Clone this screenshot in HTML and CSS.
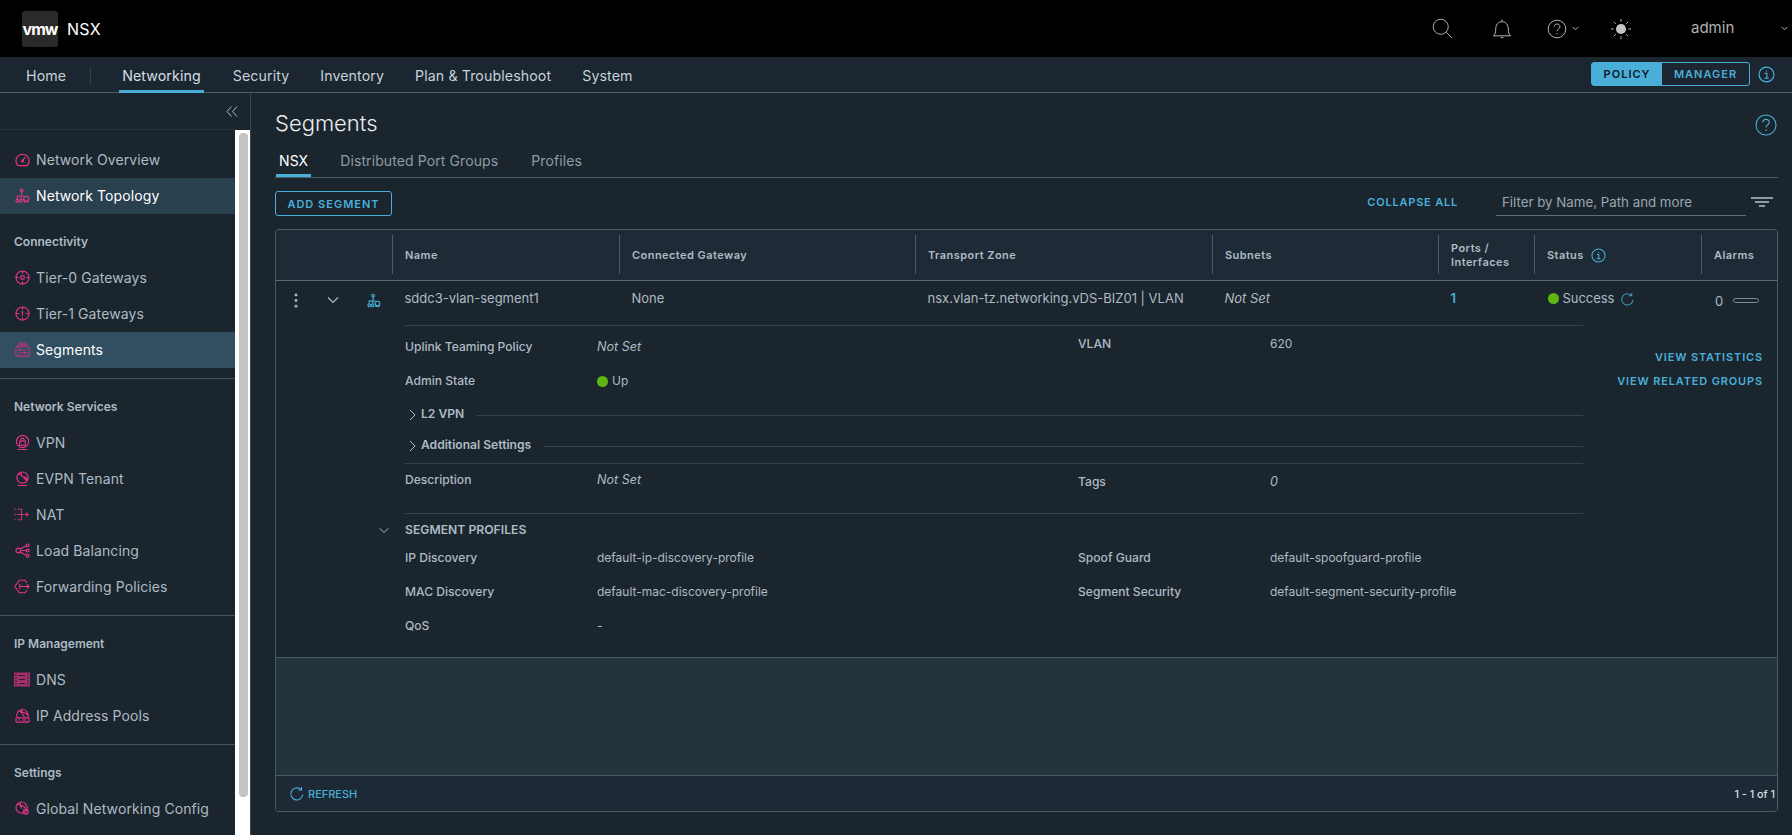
FILE: index.html
```html
<!DOCTYPE html>
<html lang="en">
<head>
<meta charset="utf-8">
<title>NSX Segments</title>
<link rel="stylesheet" href="styles.css">
</head>
<body>
<header class="topbar">
  <div class="logo">vmw</div>
  <div class="product">NSX</div>
  <div class="top-actions">
    <svg class="t-search" viewBox="0 0 24 24"><circle cx="10" cy="10" r="8.6"/><path d="M16.4 16.4 23 23"/></svg>
    <svg class="t-bell" viewBox="0 0 22 24"><path d="M1.5 19.5c2-2 2.6-3.6 2.6-7.5 0-4.6 2.6-8 6.9-8s6.9 3.4 6.9 8c0 3.900.6 5.500 2.600 7.500z"/><path d="M11 4V1.500M9.500 21.500h3"/></svg>
    <svg class="t-help" viewBox="0 0 22 22"><circle cx="11" cy="11" r="9.700"/><path d="M7.800 8.500c0-4 6.400-4 6.400 0 0 2.500-3.200 2.500-3.200 5M11 15.700v1.300"/></svg>
    <svg class="t-caret" viewBox="0 0 8 5"><path d="M.7.700 4 4 7.300.700"/></svg>
    <svg class="t-sun" viewBox="0 0 24 24"><circle class="fill" cx="12" cy="12" r="5.500"/><path d="M12 1v3M12 20v3M1 12h3M20 12h3M4.200 4.200l2.200 2.200M17.600 17.600l2.200 2.200M4.200 19.800l2.200-2.200M17.600 6.400l2.200-2.200"/></svg>
    <span class="user">admin</span>
    <svg class="t-caret t-caret-user" viewBox="0 0 8 5"><path d="M.7.700 4 4 7.300.700"/></svg>
  </div>
</header>

<nav class="navbar">
  <a class="nav-home">Home</a>
  <span class="nav-sep"></span>
  <a class="nav-link active">Networking</a>
  <a class="nav-link">Security</a>
  <a class="nav-link">Inventory</a>
  <a class="nav-link">Plan &amp; Troubleshoot</a>
  <a class="nav-link">System</a>
  <div class="mode">
    <div class="toggle"><span class="tog on">POLICY</span><span class="tog">MANAGER</span></div>
    <svg class="info info-lg" viewBox="0 0 16 16"><circle cx="8" cy="8" r="7"/><path d="M6.300 7h2v4.500M6 11.500h4.200M8 4.200v1"/></svg>
  </div>
</nav>

<div class="shell">
  <aside class="sidebar">
    <div class="panel">
      <div class="collapse-row">
        <svg class="collapse" viewBox="0 0 12 12"><path d="M5.500 1 1 6l4.500 5M11 1 6.500 6l4.500 5"/></svg>
      </div>
      <div class="menu">
        <a class="item"><svg class="ic" viewBox="0 0 16 16"><path d="M3.200 14.500a7 7 0 1 1 9.600 0zM8 9l3-3.500"/><circle cx="8" cy="9.500" r="1"/></svg>Network Overview</a>
        <a class="item hover"><svg class="ic" viewBox="0 0 16 16"><circle cx="7" cy="2.500" r="1.500"/><path d="M7 4v3M2.500 12V8.500h7M6.500 8.500V12"/><circle cx="2.500" cy="13.500" r="1.500"/><circle cx="6.500" cy="13.500" r="1.500"/><circle cx="12" cy="11.500" r="2.700"/><path d="M9.500 14.800h5"/></svg>Network Topology</a>
        <div class="group">Connectivity</div>
        <a class="item"><svg class="ic" viewBox="0 0 16 16"><circle cx="8" cy="8" r="7"/><circle cx="8" cy="8" r="2"/><path d="M8 1v3M8 12v3M1 8h3M12 8h3"/></svg>Tier-0 Gateways</a>
        <a class="item"><svg class="ic" viewBox="0 0 16 16"><circle cx="8" cy="8" r="7"/><path d="M7 6.500 8 6v4.500M8 1v3M8 12v3M1 8h3.500M11.500 8H15"/></svg>Tier-1 Gateways</a>
        <a class="item current"><svg class="ic dim" viewBox="0 0 16 16"><path d="M3.500 1h9M2.500 3h11"/><rect x="1" y="5" width="14" height="10" rx="1"/><path d="M4 8.500h8M4 11.500h8M5.500 7.500l-1.500 1 1.500 1M10.500 10.500l1.500 1-1.500 1"/></svg>Segments</a>
        <div class="rule"></div>
        <div class="group">Network Services</div>
        <a class="item"><svg class="ic" viewBox="0 0 16 16"><circle cx="8" cy="7" r="6.500"/><rect x="5" y="6.500" width="6" height="4.500"/><path d="M6.300 6.500V5a1.700 1.700 0 0 1 3.400 0v1.500M3 15.500h10"/></svg>VPN</a>
        <a class="item"><svg class="ic" viewBox="0 0 16 16"><circle cx="8" cy="7" r="6"/><path d="M3.500 3c3 .5 5 3 9 7.500M7 1c-1 3 0 5 3 5.500s2.500 2 2.500 3M3 15.500h10"/></svg>EVPN Tenant</a>
        <a class="item"><svg class="ic ic-wide dim" viewBox="0 0 18 16"><path d="M0 2h2M0 8h2M0 14h2M4 2h4.500v12H4M3 8h13M13.500 5.500 16 8l-2.500 2.500"/></svg>NAT</a>
        <a class="item"><svg class="ic" viewBox="0 0 16 16"><circle cx="3.500" cy="8" r="2.500"/><circle cx="13.500" cy="2.500" r="1.500"/><circle cx="13.500" cy="8" r="1.500"/><circle cx="13.500" cy="13.500" r="1.500"/><path d="M5.500 6.500 12 3M6 8h6M5.500 9.500 12 13"/></svg>Load Balancing</a>
        <a class="item"><svg class="ic ic-wide" viewBox="0 0 18 16"><path d="M6 .9.900 8 6 15.100h6.500l2-3M14.500 4l-2-3.100H6M6.500 5v6M6.500 8H17M14.500 5.500 17 8l-2.500 2.500"/></svg>Forwarding Policies</a>
        <div class="rule"></div>
        <div class="group">IP Management</div>
        <a class="item"><svg class="ic ic-wide dimfill" viewBox="0 0 16 14"><path d="M0 0h16v14H0z"/><path class="cut" d="M1 2.500h2M1 5.500h2M1 8.500h2M1 11.500h2M5 3h6M5 7h6M5 11h6M13 2.500h2M13 5.500h2M13 8.500h2M13 11.500h2"/></svg>DNS</a>
        <a class="item"><svg class="ic" viewBox="0 0 16 16"><path d="M2.500 10a6 6 0 1 1 11 0M4 3c2.500 1 4 3 6 6.500M7 1c-1 2.500.5 3.500 3 4s2.800 1.500 2.800 2.500"/><rect x="1" y="10.500" width="14" height="4.500" rx="1"/><path d="M3.500 12.800h2M8 12.800h4"/></svg>IP Address Pools</a>
        <div class="rule"></div>
        <div class="group">Settings</div>
        <a class="item"><svg class="ic" viewBox="0 0 16 16"><circle cx="7" cy="7" r="6"/><path d="M2.500 3c2.500.5 4 2.500 5 5M6 1c-1 2.500 0 4 2.500 4.500S11 7 11 8"/><circle cx="11.500" cy="11.500" r="2.300"/><path d="M11.500 8v1.200M11.500 13.800V15M8 11.500h1.200M13.800 11.500H15M9 9l.9.900M13.100 13.100 14 14M9 14l.9-.9M13.100 9.900 14 9"/></svg>Global Networking Config</a>
      </div>
    </div>
    <div class="scrollbar"><div class="thumb"></div></div>
  </aside>

  <main class="content">
    <div class="title-row">
      <h1>Segments</h1>
      <svg class="help" viewBox="0 0 22 22"><circle cx="11" cy="11" r="10"/><path d="M7.800 8.500c0-4.200 6.400-4.200 6.400 0 0 2.500-3.200 2.500-3.200 5M11 15.500V17"/></svg>
    </div>
    <div class="tabs">
      <a class="tab active">NSX</a>
      <a class="tab">Distributed Port Groups</a>
      <a class="tab">Profiles</a>
    </div>
    <div class="toolbar">
      <button class="btn">ADD SEGMENT</button>
      <a class="collapse-all">COLLAPSE ALL</a>
      <div class="filter">Filter by Name, Path and more</div>
      <svg class="filter-ic" viewBox="0 0 22 10"><path d="M0 1h22M4 5h14M8 9h6"/></svg>
    </div>

    <section class="table">
      <div class="thead cols">
        <div class="th th-first"></div>
        <div class="th">Name</div>
        <div class="th">Connected Gateway</div>
        <div class="th">Transport Zone</div>
        <div class="th">Subnets</div>
        <div class="th">Ports /<br>Interfaces</div>
        <div class="th">Status <svg class="info info-sm" viewBox="0 0 16 16"><circle cx="8" cy="8" r="7"/><path d="M6.300 7h2v4.500M6 11.500h4.200M8 4.200v1"/></svg></div>
        <div class="th">Alarms</div>
      </div>

      <div class="tbody">
        <div class="row cols">
          <div class="td td-ctrl">
            <svg class="kebab" viewBox="0 0 4 16"><circle cx="2" cy="2" r="1.500"/><circle cx="2" cy="8" r="1.500"/><circle cx="2" cy="14" r="1.500"/></svg>
            <svg class="chev" viewBox="0 0 12 8"><path d="M1 1.500 6 6.500l5-5"/></svg>
            <svg class="topo" viewBox="0 0 16 16"><circle cx="7" cy="2.500" r="1.500"/><path d="M7 4v3M2.500 12V8.500h7M6.500 8.500V12"/><circle cx="2.500" cy="13.500" r="1.500"/><circle cx="6.500" cy="13.500" r="1.500"/><circle cx="12" cy="11.500" r="2.700"/><path d="M9.500 14.800h5"/></svg>
          </div>
          <div class="td">sddc3-vlan-segment1</div>
          <div class="td">None</div>
          <div class="td">nsx.vlan-tz.networking.vDS-BIZ01 | VLAN</div>
          <div class="td"><em>Not Set</em></div>
          <div class="td link">1</div>
          <div class="td status"><span class="dot"></span>Success
            <svg class="refresh refresh-sm" viewBox="0 0 16 16"><path d="M13.800 8.500a6 6 0 1 1-1.900-5M12.500 1v3h-3"/></svg>
          </div>
          <div class="td alarms">0<span class="pill"></span></div>
        </div>

        <div class="expand">
          <div class="details">
            <div class="kv kv-first">
              <span class="k">Uplink Teaming Policy</span><em>Not Set</em>
              <span class="k up3">VLAN</span><span class="up3">620</span>
            </div>
            <div class="kv">
              <span class="k">Admin State</span><span class="state"><span class="dot"></span>Up</span>
            </div>
            <div class="fold fold-a">
              <svg class="chev-r" viewBox="0 0 7 12"><path d="M1 1l5 5-5 5"/></svg>
              <span>L2 VPN</span><i></i>
            </div>
            <div class="fold fold-b">
              <svg class="chev-r" viewBox="0 0 7 12"><path d="M1 1l5 5-5 5"/></svg>
              <span>Additional Settings</span><i></i>
            </div>
            <div class="kv kv-desc">
              <span class="k">Description</span><em>Not Set</em>
              <span class="k down2">Tags</span><em class="down2">0</em>
            </div>
            <div class="profiles-head">
              <svg class="chev chev-p" viewBox="0 0 12 8"><path d="M1 1.500 6 6.500l5-5"/></svg>
              <span>SEGMENT PROFILES</span>
            </div>
            <div class="kv">
              <span class="k">IP Discovery</span><span>default-ip-discovery-profile</span>
              <span class="k">Spoof Guard</span><span>default-spoofguard-profile</span>
            </div>
            <div class="kv">
              <span class="k">MAC Discovery</span><span>default-mac-discovery-profile</span>
              <span class="k">Segment Security</span><span>default-segment-security-profile</span>
            </div>
            <div class="kv">
              <span class="k">QoS</span><span>-</span>
            </div>
          </div>
          <div class="actions">
            <a>VIEW STATISTICS</a>
            <a>VIEW RELATED GROUPS</a>
          </div>
        </div>
      </div>

      <div class="empty"></div>

      <div class="tfoot">
        <a class="refresh-link"><svg class="refresh" viewBox="0 0 16 16"><path d="M13.800 8.500a6 6 0 1 1-1.900-5M12.500 1v3h-3"/></svg>REFRESH</a>
        <span class="count">1 - 1 of 1</span>
      </div>
    </section>
  </main>
</div>
</body>
</html>
```

FILE: styles.css
```css
* { box-sizing: border-box; }
html, body { margin: 0; height: 835px; overflow: hidden; }
body {
  background: #1b252e;
  color: #adbbc4;
  font-family: Inter, "Liberation Sans", sans-serif;
  font-size: 13px;
}
svg { display: block; fill: none; stroke: currentColor; flex: none; }
a { display: block; }

/* top bar */
.topbar { height: 57px; background: #000; display: flex; align-items: center; padding-left: 22px; }
.logo {
  width: 36px; height: 36px; background: #2a2a2a; border-radius: 3px; color: #fff;
  font-size: 16px; font-weight: 700; letter-spacing: -1px; text-align: center; line-height: 36px;
}
.product { margin-left: 9px; color: #fff; font-size: 16px; letter-spacing: .3px; }
.top-actions { margin-left: auto; display: flex; align-items: center; color: #c4c4c4; }
.t-search { width: 21px; height: 21px; margin-right: 39px; }
.t-bell { width: 20px; height: 22px; margin-right: 35px; }
.t-help { width: 20px; height: 20px; margin-right: 5px; }
.t-caret { width: 7px; height: 5px; margin-right: 31px; }
.t-sun { width: 22px; height: 22px; margin-right: 59px; }
.t-sun .fill { fill: currentColor; stroke: none; }
.user { font-size: 15px; width: 90px; color: #b0b0b0; padding-bottom: 2px; }
.t-caret-user { margin-right: 4px; }

/* nav */
.navbar {
  height: 36px; background: #1b2631; border-bottom: 1px solid #4d5d68;
  display: flex; align-items: stretch; color: #c6d1d9; font-size: 14.200px; padding-left: 26px;
}
.navbar a { line-height: 37px; letter-spacing: .1px; }
.nav-sep { width: 1px; height: 18px; background: #33424d; margin: 10px 28px 0 24px; }
.nav-link { padding: 0 3px; margin-right: 25px; height: 36px; border-bottom: 3px solid transparent; }
.nav-link.active { border-bottom-color: #49afd9; color: #d6dfe5; margin-right: 26px; }
.mode { margin-left: auto; display: flex; align-items: center; padding-right: 18px; }
.toggle { display: flex; width: 159px; height: 24px; border: 1px solid #49afd9; border-radius: 3px; margin-top: -2px; }
.tog { color: #49afd9; font-size: 11px; font-weight: 600; letter-spacing: 1px; line-height: 22px; flex: 1; text-align: center; }
.tog.on { flex: none; width: 70px; background: #49afd9; color: #10191f; }
.info { color: #49afd9; stroke-width: 1.100; }
.info-lg { width: 17px; height: 17px; margin-left: 8px; margin-right: -1px; }
.info-sm { width: 15px; height: 15px; margin-left: 7px; }

/* shell */
.shell { display: flex; height: 742px; }

/* sidebar */
.sidebar { width: 251px; display: flex; border-right: 1px solid #39464f; }
.panel { width: 235px; }
.collapse-row { height: 37px; border-bottom: 1px solid #28343d; display: flex; justify-content: flex-end; align-items: center; }
.collapse { width: 12px; height: 13px; color: #adbbc4; margin-right: -3px; }
.menu { padding-top: 12px; font-size: 14px; }
.item { height: 36px; display: flex; align-items: center; padding: 0 0 1px 15px; color: #adbbc4; letter-spacing: .1px; }
.item.hover { background: #29404f; color: #fff; }
.item.current { background: #324f62; color: #fff; }
.ic { width: 15px; height: 15px; margin-right: 6px; color: #e8348a; stroke-width: 1.200; }
.ic-wide { width: 16px; margin-left: -1px; }
.ic.dim { color: #c2327a; }
.dimfill { color: #a52f69; }
.dimfill path { fill: #a52f69; stroke: none; }
.dimfill path.cut { fill: none; stroke: #1b252e; stroke-width: 1; }
.group { height: 46px; padding-top: 18px; line-height: 20px; font-size: 12px; font-weight: 600; color: #adbbc4; padding-left: 14px; }
.rule { height: 1px; background: #46545f; margin-top: 10px; }
.scrollbar { width: 15px; background: #fff; margin-top: 37px; padding: 3px 2px 0 4px; }
.thumb { height: 664px; background: #c4c4c4; border-radius: 4px; }

/* content */
.content { flex: 1; padding: 0 14px 0 24px; min-width: 0; }
.title-row { height: 46px; padding-top: 14px; display: flex; justify-content: space-between; }
h1 { margin: 0; font-weight: 300; font-size: 22px; line-height: 32px; color: #eaedf0; }
.help { width: 22px; height: 22px; color: #49afd9; margin-top: 7px; margin-right: 1px; stroke-width: 1.100; }
.tabs { height: 39px; border-bottom: 1px solid #4d5d68; display: flex; color: #8d9ba5; font-size: 14px; }
.tab { height: 38px; padding: 12px 3px 3px; line-height: 20px; margin-right: 26px; border-bottom: 3px solid transparent; letter-spacing: .1px; }
.tab.active { color: #fff; border-bottom-color: #49afd9; margin-left: 1px; margin-right: 26px; }
.tab:nth-child(2) { margin-right: 27px; }
.toolbar { height: 51px; display: flex; align-items: flex-start; padding: 13px 0 0; }
.btn {
  width: 117px; height: 25px; background: transparent; border: 1px solid #49afd9; border-radius: 3px;
  color: #49afd9; font: 600 11px Inter, "Liberation Sans", sans-serif; letter-spacing: 1px; padding: 0;
}
.collapse-all { margin-left: auto; color: #49afd9; font-size: 11px; font-weight: 600; letter-spacing: .8px; line-height: 23px; }
.filter { width: 250px; height: 25px; margin-left: 38px; border-bottom: 1px solid #5f6f7a; padding-left: 6px; line-height: 22px; color: #98a6af; font-size: 13.300px; }
.filter-ic { width: 22px; height: 10px; margin: 6px 5px 0 5px; color: #b8c4cc; stroke-width: 1.300; }

/* table */
.table { height: 583px; border: 1px solid #4b5a65; border-radius: 3px; display: flex; flex-direction: column; }
.cols { display: grid; grid-template-columns: 116px 227px 296px 297px 226px 96px 167px 1fr; }
.thead { height: 51px; flex: none; background: #1e2a35; border-bottom: 1px solid #5a6b77; align-items: center; padding-bottom: 2px; }
.th {
  height: 39px; border-left: 1px solid #4d5d68; padding: 2px 0 0 12px; display: flex; align-items: center;
  font-size: 11px; font-weight: 600; letter-spacing: .45px; line-height: 14px; color: #adbbc4;
}
.th-first { border-left: 0; }
.tbody { flex: none; height: 376px; }
.row { height: 44px; align-items: start; }
.td { padding: 7px 0 0 12.500px; line-height: 20px; }
.td em { font-style: italic; }
.td-ctrl { padding: 0; display: flex; align-items: center; height: 38px; }
.kebab { width: 4px; height: 15px; fill: #adbbc4; stroke: none; margin-left: 18px; }
.chev { width: 12px; height: 8px; color: #adbbc4; stroke-width: 1.200; }
.td-ctrl .chev { margin-left: 29px; }
.topo { width: 14px; height: 15px; color: #49afd9; margin-left: 28px; stroke-width: 1.300; }
.link { color: #49afd9; font-weight: 600; }
.status { display: flex; align-items: flex-start; padding-left: 13.500px; letter-spacing: -.05px; }
.dot { width: 11px; height: 11px; background: #60b515; border-radius: 50%; margin-right: 4px; margin-top: 5px; flex: none; }
.refresh { width: 16px; height: 16px; color: #49afd9; stroke-width: 1.100; }
.refresh-sm { width: 15px; height: 15px; margin: 4px 0 0 6px; opacity: .85; }
.alarms { display: flex; padding-left: 14px; padding-top: 10px; }
.pill { width: 26px; height: 5px; border: 1px solid #7b8a94; border-radius: 3px; margin: 7px 0 0 10px; }

.expand { display: flex; }
.details { width: 1178px; margin-left: 129px; border-top: 1px solid #34424c; font-size: 12px; }
.kv { display: grid; grid-template-columns: 192px 481px 192px 1fr; height: 34px; align-items: center; line-height: 20px; }
.kv-first { margin-top: 4px; }
.kv-desc { height: 32px; border-top: 1px solid #34424c; margin-top: 3px; }
.k { font-weight: 500; font-size: 12.100px; }
.kv em { font-style: italic; font-size: 12.600px; }
.up3 { margin-top: -6px; }
.down2 { margin-top: 4px; }
.state { display: flex; }
.fold { display: flex; align-items: center; font-weight: 600; font-size: 12.100px; padding-left: 4px; }
.fold-a { height: 33px; }
.fold-b { height: 29px; }
.fold span { margin: 0 12px 2px 5px; white-space: nowrap; }
.fold i { flex: 1; height: 1px; background: #34424c; margin-top: 1px; }
.chev-r { width: 7px; height: 12px; color: #adbbc4; }
.profiles-head { height: 28px; border-top: 1px solid #34424c; margin-top: 18px; padding-top: 6px; line-height: 20px; font-weight: 600; font-size: 12.200px; display: flex; }
.chev-p { width: 10px; height: 7px; margin: 7px 16px 0 -26px; }
.actions { flex: 1; display: flex; flex-direction: column; align-items: flex-end; padding: 22px 14px 0 0; gap: 4px; color: #49afd9; font-size: 11px; font-weight: 600; letter-spacing: .85px; line-height: 20px; }

.empty { flex: 1; background: #22343c; border-top: 1px solid #4b5a65; border-bottom: 1px solid #4b5a65; }
.tfoot { height: 35px; flex: none; background: #1d2934; display: flex; align-items: center; padding: 1px 2px 0 13px; justify-content: space-between; }
.refresh-link { display: flex; align-items: center; color: #49afd9; font-size: 11px; font-weight: 500; gap: 3px; }
.count { color: #d6dde2; font-size: 10.800px; font-weight: 500; }
```
